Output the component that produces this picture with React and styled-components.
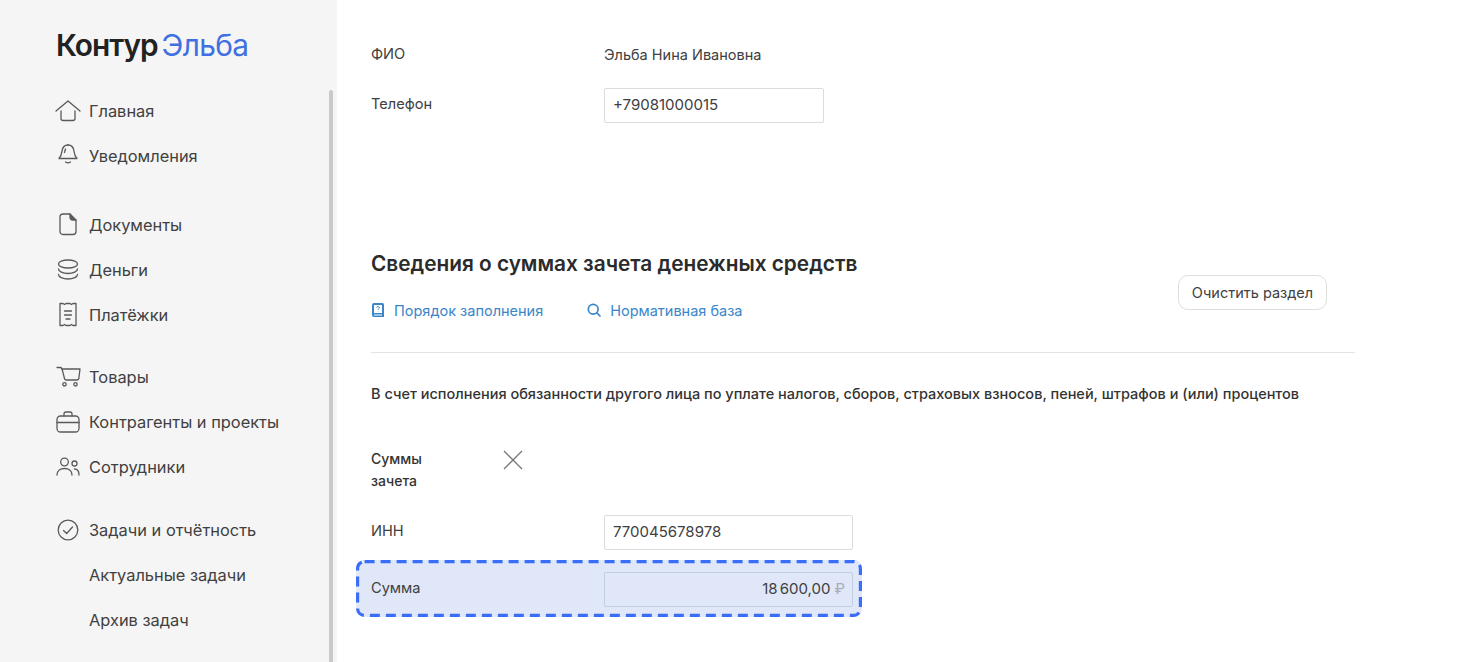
import React from 'react'
import styled, { createGlobalStyle } from 'styled-components'

const Global = createGlobalStyle`
  html, body { margin: 0; padding: 0; height: 100%; background: #fff; overflow: hidden; }
  body { font-family: Inter, "Noto Sans", sans-serif; color: #333; }
`

const Page = styled.div`
  display: flex;
  width: 1460px;
  height: 662px;
  overflow: hidden;
`

const Sidebar = styled.aside`
  position: relative;
  box-sizing: border-box;
  width: 337px;
  flex: none;
  background: #f5f5f5;
  padding: 27px 0 0 56px;
`

const Scrollbar = styled.div`
  position: absolute;
  left: 329px;
  top: 90px;
  bottom: 0;
  width: 4px;
  border-radius: 2px 2px 0 0;
  background: #c9c9c9;
`

const Logo = styled.div`
  display: flex;
  gap: 4px;
  height: 36px;
  line-height: 36px;
  font-size: 29.8px;
  letter-spacing: -0.6px;
`

const LogoDark = styled.span`
  font-weight: 600;
  color: #222;
  letter-spacing: -1px;
`

const LogoBlue = styled.span`
  font-weight: 400;
  color: #3f6fe0;
`

const Nav = styled.nav`
  display: flex;
  flex-direction: column;
  margin-top: 25px;
`

const Group = styled.div`
  display: flex;
  flex-direction: column;
  margin-bottom: ${p => p.$gap || 0}px;
`

const NavItem = styled.div`
  display: flex;
  align-items: center;
  height: 45px;
  font-size: 16.4px;
  color: #404040;
`

const IconSlot = styled.span`
  display: flex;
  align-items: center;
  justify-content: center;
  width: 24px;
  height: 24px;
  margin-right: 9px;
  flex: none;
  svg { display: block; flex: none; }
`

const Main = styled.main`
  box-sizing: border-box;
  isolation: isolate;
  width: 984px;
  margin-left: 34px;
  padding-top: 38px;
`

const Row = styled.div`
  position: relative;
  display: flex;
  align-items: center;
  width: ${p => p.$width || 'auto'};
  height: 35px;
  margin-bottom: ${p => p.$mb || 0}px;
`

const Label = styled.div`
  width: 233px;
  flex: none;
  padding-bottom: 3px;
  font-size: 14.6px;
  color: #404040;
`

const Value = styled.div`
  padding-bottom: 3px;
  font-size: 14.5px;
  color: #404040;
`

const Field = styled.div`
  box-sizing: border-box;
  display: flex;
  align-items: center;
  justify-content: ${p => (p.$right ? 'flex-end' : 'flex-start')};
  width: ${p => p.$w}px;
  height: 35px;
  padding: 0 ${p => (p.$right ? 7 : 8)}px 3px 8px;
  font-size: 15px;
  word-spacing: -2px;
  color: #404040;
  background: ${p => (p.$filled ? 'transparent' : '#fff')};
  border: 1px solid ${p => (p.$filled ? '#c4cde0' : '#dcdcdc')};
  border-radius: 2px;
`

const Rouble = styled.span`
  margin-left: 4px;
  color: #a9adb5;
`

const Highlight = styled.div`
  position: absolute;
  z-index: -1;
  inset: -12px -9px -10px -15px;
  background: #dfe7f9;
  border-radius: 8px;
`

const DashedFrame = styled.svg`
  position: absolute;
  inset: 0;
  display: block;
`

const SectionHead = styled.div`
  display: flex;
  justify-content: space-between;
  margin-top: 127px;
  padding-right: 28px;
`

const Title = styled.h2`
  margin: 0;
  font-size: 20.8px;
  line-height: 28px;
  font-weight: 600;
  color: #2b2b2b;
`

const Links = styled.div`
  display: flex;
  gap: 44px;
  margin-top: 20px;
`

const LinkItem = styled.a`
  display: flex;
  align-items: center;
  gap: 9px;
  height: 24px;
  font-size: 14.5px;
  color: #3a86c8;
  svg { display: block; }
`

const ClearButton = styled.button`
  box-sizing: border-box;
  align-self: flex-end;
  width: 149px;
  height: 35px;
  margin-bottom: 12px;
  padding: 0;
  font-family: inherit;
  font-size: 14.5px;
  color: #404040;
  background: #fff;
  border: 1px solid #dedede;
  border-radius: 10px;
`

const Divider = styled.hr`
  margin: 30px 0 0;
  width: 984px;
  height: 1px;
  border: 0;
  background: #e4e4e4;
`

const Lead = styled.p`
  margin: 31px 0 0;
  font-size: 14.5px;
  line-height: 20px;
  font-weight: 500;
  color: #333;
  white-space: nowrap;
`

const GroupHead = styled.div`
  display: flex;
  margin-top: 44px;
  margin-bottom: 23px;
`

const GroupTitle = styled.div`
  width: 131px;
  font-size: 14px;
  line-height: 22px;
  font-weight: 500;
  color: #333;
`

const CloseIcon = styled.svg`
  display: block;
  margin-top: 1px;
`

const stroke = { fill: 'none', stroke: '#5a5a5a', strokeWidth: 1.3, strokeLinecap: 'round', strokeLinejoin: 'round' }

const icons = {
  home: (
    <svg width="26" height="24" viewBox="0 0 26 24" {...stroke}>
      <path d="M1 12 13 2l12 10" />
      <path d="M6 12v7.500a2 2 0 0 0 2 2h10a2 2 0 0 0 2-2V12" />
    </svg>
  ),
  bell: (
    <svg width="22" height="24" viewBox="0 2.500 22 24" {...stroke}>
      <path d="M11 1.500v2" />
      <path d="M11 3.500c-3.600 0-5.600 2.800-6 6.200-.3 2.800-1.200 5.300-3 7.300h18c-1.800-2-2.700-4.500-3-7.300-.4-3.400-2.400-6.200-6-6.200Z" />
      <path d="M8.500 20.500c1.500 1 3.500 1 5 0" />
      <path d="M8.500 7.500 7.500 11" />
    </svg>
  ),
  doc: (
    <svg width="18" height="23" viewBox="0 0 18 23" {...stroke}>
      <path d="M4 1h7l6 6v11.500a3 3 0 0 1-3 3H4a3 3 0 0 1-3-3V4a3 3 0 0 1 3-3Z" />
      <path d="M11 1v3a3 3 0 0 0 3 3h3" fill="#5a5a5a" />
    </svg>
  ),
  coins: (
    <svg width="22" height="22" viewBox="0 0 22 22" {...stroke}>
      <ellipse cx="11" cy="5" rx="9.500" ry="4" />
      <path d="M1.500 10c0 2.400 4.200 4.500 9.500 4.500s9.500-2.100 9.500-4.500" />
      <path d="M1.500 15.500c0 2.400 4.200 4.500 9.500 4.500s9.500-2.100 9.500-4.500" />
    </svg>
  ),
  receipt: (
    <svg width="18" height="25" viewBox="0 0 18 25" {...stroke}>
      <path d="M1 1.500h3l1.500 1 1.500-1h4l1.500 1 1.500-1h3v22h-3l-1.500-1-1.500 1H7l-1.500-1-1.500 1H1Z" />
      <path d="M5.500 9h7M5.500 13h7M7 17h4" />
    </svg>
  ),
  cart: (
    <svg width="25" height="21" viewBox="0 0 25 21" {...stroke}>
      <path d="M1 1.500h3.500c.8 0 1.300.5 1.500 1.300L8.500 12.500c.2 1 .8 1.500 1.800 1.500H21c1 0 1.500-.5 1.800-1.500L24 3H5.500" />
      <circle cx="8.500" cy="18.300" r="1.700" />
      <circle cx="19.500" cy="18.300" r="1.700" />
    </svg>
  ),
  case: (
    <svg width="24" height="22" viewBox="0 0 24 22" {...stroke}>
      <rect x="1" y="5" width="22" height="16" rx="3.500" />
      <path d="M8 5V3a2 2 0 0 1 2-2h4a2 2 0 0 1 2 2v2" />
      <path d="M1 11.500h22" />
    </svg>
  ),
  people: (
    <svg width="24" height="19" viewBox="0 0 24 19" {...stroke}>
      <circle cx="8.500" cy="5" r="3.800" />
      <path d="M1 18c0-4 3-6.500 7.500-6.500S16 14 16 18" />
      <circle cx="18.500" cy="6.500" r="2.500" />
      <path d="M18.500 12c2.800 0 4.500 2.300 4.500 6" />
    </svg>
  ),
  check: (
    <svg width="22" height="22" viewBox="0 0 22 22" {...stroke}>
      <circle cx="11" cy="11" r="9.800" />
      <path d="m6.500 11.500 3.200 3 5.800-6.500" />
    </svg>
  ),
}

const groups = [
  { gap: 24, items: [['home', 'Главная'], ['bell', 'Уведомления']] },
  { gap: 17, items: [['doc', 'Документы'], ['coins', 'Деньги'], ['receipt', 'Платёжки']] },
  { gap: 18, items: [['cart', 'Товары'], ['case', 'Контрагенты и проекты'], ['people', 'Сотрудники']] },
  { gap: 0, items: [['check', 'Задачи и отчётность'], [null, 'Актуальные задачи'], [null, 'Архив задач']] },
]

export default function App() {
  return (
    <Page>
      <Global />
      <Sidebar>
        <Logo>
          <LogoDark>Контур</LogoDark>
          <LogoBlue>Эльба</LogoBlue>
        </Logo>
        <Nav>
          {groups.map((group, i) => (
            <Group key={i} $gap={group.gap}>
              {group.items.map(([icon, label]) => (
                <NavItem key={label}>
                  <IconSlot>{icon && icons[icon]}</IconSlot>
                  {label}
                </NavItem>
              ))}
            </Group>
          ))}
        </Nav>
        <Scrollbar />
      </Sidebar>
      <Main>
        <Row $mb={15}>
          <Label>ФИО</Label>
          <Value>Эльба Нина Ивановна</Value>
        </Row>
        <Row>
          <Label>Телефон</Label>
          <Field $w={220}>+79081000015</Field>
        </Row>
        <SectionHead>
          <div>
            <Title>Сведения о суммах зачета денежных средств</Title>
            <Links>
              <LinkItem>
                <svg width="14" height="16" viewBox="0 0 14 16">
                  <path d="M3 1h8.500A1.500 1.500 0 0 1 13 2.500V15H3a2 2 0 0 1-2-2V3a2 2 0 0 1 2-2Z" fill="#3a86c8" />
                  <rect x="3" y="3" width="8" height="8" fill="#fff" />
                  <path d="M5.500 5.500c.3-1.200 3-1.200 3 .2 0 1-1.500 1-1.500 2M7 9.200v.3" fill="none" stroke="#3a86c8" strokeWidth="1" />
                  <path d="M3 13h8" stroke="#fff" strokeWidth="1" />
                </svg>
                Порядок заполнения
              </LinkItem>
              <LinkItem>
                <svg width="14" height="14" viewBox="0 0 14 14" fill="none" stroke="#3a86c8" strokeWidth="1.700" strokeLinecap="round">
                  <circle cx="6.200" cy="6.200" r="4.900" />
                  <path d="m10 10 3 3" />
                </svg>
                Нормативная база
              </LinkItem>
            </Links>
          </div>
          <ClearButton>Очистить раздел</ClearButton>
        </SectionHead>
        <Divider />
        <Lead>В счет исполнения обязанности другого лица по уплате налогов, сборов, страховых взносов, пеней, штрафов и (или) процентов</Lead>
        <GroupHead>
          <GroupTitle>Суммы<br />зачета</GroupTitle>
          <CloseIcon width="22" height="22" viewBox="0 0 22 22" fill="none" stroke="#777" strokeWidth="1.300">
            <path d="m2 2 18 18M20 2 2 20" />
          </CloseIcon>
        </GroupHead>
        <Row $mb={22}>
          <Label>ИНН</Label>
          <Field $w={249}>770045678978</Field>
        </Row>
        <Row $width="482px">
          <Highlight>
            <DashedFrame width="506" height="57" viewBox="0 0 506 57" fill="none" stroke="#3a6ef6" strokeWidth="3.200" strokeDasharray="10 6">
              <rect x="1.600" y="1.600" width="502.800" height="53.800" rx="7" />
            </DashedFrame>
          </Highlight>
          <Label>Сумма</Label>
          <Field $w={249} $right $filled>18 600,00<Rouble>₽</Rouble></Field>
        </Row>
      </Main>
    </Page>
  )
}
